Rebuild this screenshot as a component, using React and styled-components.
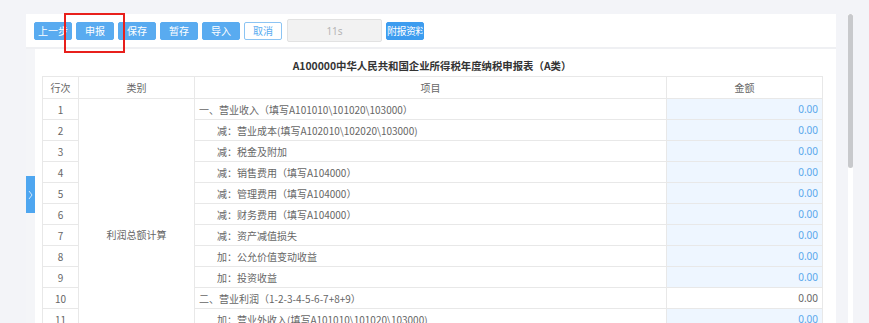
import React from "react";
import styled, { createGlobalStyle } from "styled-components";

const Global = createGlobalStyle`
  html, body { margin: 0; padding: 0; height: 323px; overflow: hidden; }
  body { background: #f3f4f8; font-family: "Noto Sans CJK SC", "Liberation Sans", sans-serif; color: #666; }
`;

const Page = styled.div`
  position: relative;
  display: flex;
  padding: 14px 0 0 26px;
  height: 309px;
`;

const Main = styled.div`
  width: 810px;
  display: flex;
  flex-direction: column;
`;

const Toolbar = styled.div`
  height: 35px;
  background: #fff;
  display: flex;
  align-items: center;
  gap: 4px;
  padding-left: 8px;
  border-bottom: 2px solid #eff0f3;
  box-sizing: border-box;
`;

const Btn = styled.button`
  width: 38px;
  height: 18px;
  padding: 0;
  border: 1px solid ${(p) => (p.$outline ? "#8cc4f3" : p.$dark ? "#3d9cef" : "#59abf0")};
  background: ${(p) => (p.$outline ? "#fff" : p.$dark ? "#3d9cef" : "#59abf0")};
  color: ${(p) => (p.$outline ? "#59abf0" : "#fff")};
  font-family: "Noto Sans CJK SC", sans-serif;
  font-size: 10px;
  line-height: 16px;
  border-radius: 2px;
  box-sizing: border-box;
  white-space: nowrap;
  overflow: hidden;
  letter-spacing: ${(p) => (p.$tight ? "-0.5px" : "0")};
`;

const Timer = styled.div`
  width: 95px;
  height: 23px;
  margin-left: 1px;
  background: #f2f2f2;
  border: 1px solid #e2e2e2;
  border-radius: 2px;
  box-sizing: border-box;
  color: #b5b5b5;
  font-size: 10px;
  display: flex;
  align-items: center;
  justify-content: center;
  font-family: "Noto Sans", sans-serif;
`;

const Body = styled.div`
  flex: 1;
  display: flex;
  min-height: 0;
`;

const Side = styled.div`
  width: 9px;
  background: #f4f5f8;
  padding-top: 127px;
`;

const Tab = styled.div`
  width: 9px;
  height: 37px;
  background: #4ea6f0;
  display: flex;
  align-items: center;
  justify-content: center;
`;

const Content = styled.div`
  flex: 1;
  background: #fff;
  padding-left: 7px;
  overflow: hidden;
`;

const Title = styled.div`
  width: 780px;
  height: 27px;
  display: flex;
  align-items: center;
  justify-content: center;
  font-size: 10.4px;
  font-weight: bold;
  color: #333;
  padding-top: 6px;
  box-sizing: border-box;
`;

const Table = styled.table`
  border-collapse: collapse;
  table-layout: fixed;
  width: 780px;
  font-size: 10px;
  color: #666;
`;

const Th = styled.th`
  height: 21px;
  padding: 0;
  border: 1px solid #e8e8e8;
  font-weight: normal;
  text-align: center;
  color: #666;
`;

const Td = styled.td`
  height: 20px;
  padding: 0;
  border: 1px solid #e8e8e8;
  text-align: center;
  white-space: nowrap;
  overflow: hidden;
`;

const ItemTd = styled(Td)`
  text-align: left;
  padding-left: ${(p) => (p.$indent ? "22px" : "4px")};
`;

const AmountTd = styled(Td)`
  text-align: right;
  padding-right: 4px;
  background: ${(p) => (p.$plain ? "#fff" : "#eef6ff")};
  color: ${(p) => (p.$plain ? "#666" : "#5aa8ec")};
  font-family: "Noto Sans", sans-serif;
`;

const CategoryTd = styled(Td)`
  vertical-align: top;
`;

const CategoryText = styled.div`
  padding-top: 128px;
`;

const ScrollGap = styled.div`
  width: 12px;
`;

const Track = styled.div`
  width: 5px;
  background: #fff;
`;

const Thumb = styled.div`
  width: 5px;
  height: 154px;
  background: #c8c9cc;
  border-radius: 3px;
`;

const RedBox = styled.div`
  position: absolute;
  left: 64px;
  top: 13px;
  width: 61px;
  height: 40px;
  border: 2px solid #e8201c;
  box-sizing: border-box;
`;

const rows = [
  ["一、营业收入（填写A101010\\101020\\103000）", false],
  ["减：营业成本(填写A102010\\102020\\103000)", true],
  ["减：税金及附加", true],
  ["减：销售费用（填写A104000）", true],
  ["减：管理费用（填写A104000）", true],
  ["减：财务费用（填写A104000）", true],
  ["减：资产减值损失", true],
  ["加：公允价值变动收益", true],
  ["加：投资收益", true],
  ["二、营业利润（1-2-3-4-5-6-7+8+9）", false, true],
  ["加：营业外收入(填写A101010\\101020\\103000)", true],
  ["减：营业外支出(填写A102010\\102020\\103000)", true],
  ["三、利润总额（10+11-12）", false, true],
];

export default function App() {
  return (
    <>
      <Global />
      <Page>
        <Main>
          <Toolbar>
            <Btn>上一步</Btn>
            <Btn>申报</Btn>
            <Btn>保存</Btn>
            <Btn>暂存</Btn>
            <Btn>导入</Btn>
            <Btn $outline>取消</Btn>
            <Timer>11s</Timer>
            <Btn $dark $tight>附报资料</Btn>
          </Toolbar>
          <Body>
            <Side>
              <Tab>
                <svg width="5" height="10" viewBox="0 0 5 10">
                  <path d="M1 1 L4 5 L1 9" stroke="#cfe6fb" strokeWidth="1" fill="none" />
                </svg>
              </Tab>
            </Side>
            <Content>
              <Title>A100000中华人民共和国企业所得税年度纳税申报表（A类）</Title>
              <Table>
                <colgroup>
                  <col style={{ width: 36 }} />
                  <col style={{ width: 116 }} />
                  <col style={{ width: 472 }} />
                  <col style={{ width: 156 }} />
                </colgroup>
                <thead>
                  <tr>
                    <Th>行次</Th>
                    <Th>类别</Th>
                    <Th>项目</Th>
                    <Th>金额</Th>
                  </tr>
                </thead>
                <tbody>
                  {rows.map(([label, indent, plain], i) => (
                    <tr key={i}>
                      <Td>{i + 1}</Td>
                      {i === 0 && (
                        <CategoryTd rowSpan={rows.length}>
                          <CategoryText>利润总额计算</CategoryText>
                        </CategoryTd>
                      )}
                      <ItemTd $indent={indent}>{label}</ItemTd>
                      <AmountTd $plain={plain}>0.00</AmountTd>
                    </tr>
                  ))}
                </tbody>
              </Table>
            </Content>
          </Body>
        </Main>
        <ScrollGap />
        <Track>
          <Thumb />
        </Track>
        <RedBox />
      </Page>
    </>
  );
}
